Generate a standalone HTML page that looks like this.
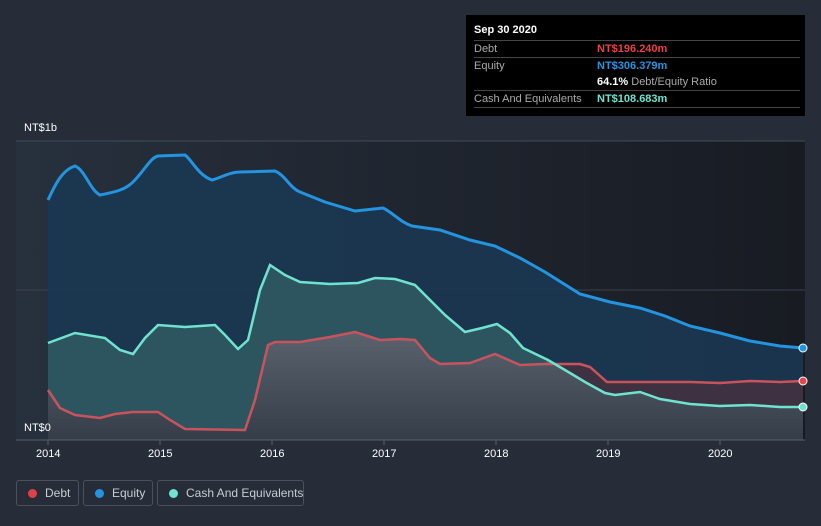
<!DOCTYPE html>
<html><head><meta charset="utf-8"><style>
body{margin:0;width:821px;height:526px;background:#262d39;font-family:"Liberation Sans",sans-serif;overflow:hidden;position:relative}
.tt{position:absolute;left:466px;top:15px;width:339px;height:101px;background:#000;color:#fff;font-size:11px}
.row{position:absolute;left:8px;width:326px;border-top:1px solid #444;height:17px;line-height:17px}
.lab{color:#aaa;position:absolute;left:0}
.val{position:absolute;left:123px;font-weight:bold;white-space:nowrap}
.leg{position:absolute;top:480px;height:26px;border:1px solid #4a505c;border-radius:3px;color:#c8ccd2;font-size:12px;line-height:25px;box-sizing:border-box;white-space:nowrap}
.dot{position:absolute;top:8px;left:11px;width:9px;height:9px;border-radius:50%}
.ax{position:absolute;color:#fff;font-size:11px}
</style></head><body>
<svg width="821" height="526" style="position:absolute;left:0;top:0">
<defs>
<linearGradient id="bg" x1="0" x2="1"><stop offset="0" stop-color="#27303d"/><stop offset="1" stop-color="#181b22"/></linearGradient>
<linearGradient id="gr" x1="0" y1="0" x2="0" y2="1"><stop offset="0" stop-color="#5a636d"/><stop offset="1" stop-color="#353d48"/></linearGradient>
</defs>
<rect x="16" y="141" width="789" height="299" fill="url(#bg)"/>
<line x1="16" y1="141" x2="805" y2="141" stroke="#444b57"/>
<line x1="16" y1="290" x2="805" y2="290" stroke="#3a414d"/>
<path fill="#1b3752" fill-opacity="0.9" d="M48,200 C55,185 62,170 75,166 C85,170 90,190 100,195 C115,192 125,190 133,182 C145,170 150,158 158,156 L185,155 C192,160 198,175 212,180 C220,178 230,172 240,172 L275,171 C285,175 290,188 300,192 L325,202 L355,211 L383,208 C392,212 400,222 412,226 L440,230 L470,240 L495,246 L520,258 L545,272 L580,294 L610,302 L640,308 L665,316 L690,326 L720,333 L750,341 L780,346 L803,348 L803,440 L48,440Z"/>
<path fill="#3e3242" d="M48,390 L60,408 L75,415 L100,418 L115,414 L133,412 L158,412 L170,420 L185,429 L245,430 L255,400 L268,345 L275,342 L300,342 L330,337 L355,332 L380,340 L400,339 L415,340 L430,358 L440,364 L470,363 L495,354 L520,365 L545,364 L580,364 L590,367 L607,382 L803,381 L803,440 L48,440Z"/>
<path fill="#2d5560" d="M48,343 L75,333 L105,338 L120,350 L133,354 L145,338 L158,325 L185,327 L215,325 L225,335 L238,349 L248,340 L260,290 L270,265 L285,275 L300,282 L330,284 L358,283 L375,278 L395,279 L415,285 L430,300 L445,315 L465,332 L482,328 L497,324 L510,333 L523,348 L548,360 L565,370 L585,382 L605,393 L615,395 L640,392 L660,399 L690,404 L720,406 L750,405 L780,407 L803,407 L803,440 L48,440Z"/>
<path fill="url(#gr)" d="M48,390 L60,408 L75,415 L100,418 L115,414 L133,412 L158,412 L170,420 L185,429 L245,430 L255,400 L268,345 L275,342 L300,342 L330,337 L355,332 L380,340 L400,339 L415,340 L430,358 L440,364 L470,363 L495,354 L520,365 L545,364 L548,360 L565,370 L585,382 L605,393 L615,395 L640,392 L660,399 L690,404 L720,406 L750,405 L780,407 L803,407 L803,440 L48,440Z"/>
<path fill="none" stroke="#2394df" stroke-width="3" d="M48,200 C55,185 62,170 75,166 C85,170 90,190 100,195 C115,192 125,190 133,182 C145,170 150,158 158,156 L185,155 C192,160 198,175 212,180 C220,178 230,172 240,172 L275,171 C285,175 290,188 300,192 L325,202 L355,211 L383,208 C392,212 400,222 412,226 L440,230 L470,240 L495,246 L520,258 L545,272 L580,294 L610,302 L640,308 L665,316 L690,326 L720,333 L750,341 L780,346 L803,348"/>
<path fill="none" stroke="#c9535d" stroke-width="2.5" d="M48,390 L60,408 L75,415 L100,418 L115,414 L133,412 L158,412 L170,420 L185,429 L245,430 L255,400 L268,345 L275,342 L300,342 L330,337 L355,332 L380,340 L400,339 L415,340 L430,358 L440,364 L470,363 L495,354 L520,365 L545,364 L580,364 L590,367 L607,382 L640,382 L690,382 L720,383 L750,381 L780,382 L803,381"/>
<path fill="none" stroke="#6fe3d0" stroke-width="2.5" d="M48,343 L75,333 L105,338 L120,350 L133,354 L145,338 L158,325 L185,327 L215,325 L225,335 L238,349 L248,340 L260,290 L270,265 L285,275 L300,282 L330,284 L358,283 L375,278 L395,279 L415,285 L430,300 L445,315 L465,332 L482,328 L497,324 L510,333 L523,348 L548,360 L565,370 L585,382 L605,393 L615,395 L640,392 L660,399 L690,404 L720,406 L750,405 L780,407 L803,407"/>
<line x1="16" y1="440" x2="805" y2="440" stroke="#5a606b"/>
<g stroke="#5a606b"><line x1="48" y1="440" x2="48" y2="445"/><line x1="160" y1="440" x2="160" y2="445"/><line x1="272" y1="440" x2="272" y2="445"/><line x1="384" y1="440" x2="384" y2="445"/><line x1="496" y1="440" x2="496" y2="445"/><line x1="608" y1="440" x2="608" y2="445"/><line x1="720" y1="440" x2="720" y2="445"/></g>
<circle cx="803" cy="348" r="4" fill="#2394df" stroke="#fff" stroke-width="1"/>
<circle cx="803" cy="381" r="4" fill="#e0474f" stroke="#fff" stroke-width="1"/>
<circle cx="803" cy="407" r="4" fill="#6fe3d0" stroke="#fff" stroke-width="1"/>
</svg>
<div class="ax" style="left:24px;top:122px">NT$1b</div>
<div class="ax" style="left:24px;top:422px">NT$0</div>
<div class="ax" style="left:36px;top:448px">2014</div>
<div class="ax" style="left:148px;top:448px">2015</div>
<div class="ax" style="left:260px;top:448px">2016</div>
<div class="ax" style="left:372px;top:448px">2017</div>
<div class="ax" style="left:484px;top:448px">2018</div>
<div class="ax" style="left:596px;top:448px">2019</div>
<div class="ax" style="left:708px;top:448px">2020</div>
<div class="tt">
<div style="position:absolute;left:8px;top:9px;font-weight:bold">Sep 30 2020</div>
<div class="row" style="top:25px"><span class="lab">Debt</span><span class="val" style="color:#e8404a">NT$196.240m</span></div>
<div class="row" style="top:42px"><span class="lab">Equity</span><span class="val" style="color:#2394df">NT$306.379m</span></div>
<div class="row" style="top:59px;border-top:none"><span class="val">64.1% <span style="color:#aaa;font-weight:normal">Debt/Equity Ratio</span></span></div>
<div class="row" style="top:75px"><span class="lab">Cash And Equivalents</span><span class="val" style="color:#6fe3d0">NT$108.683m</span></div>
<div class="row" style="top:92px;height:0"></div>
</div>
<div class="leg" style="left:16px;width:63px"><span class="dot" style="background:#e0404a"></span><span style="position:absolute;left:28px">Debt</span></div>
<div class="leg" style="left:83px;width:70px"><span class="dot" style="background:#2394df"></span><span style="position:absolute;left:28px">Equity</span></div>
<div class="leg" style="left:157px;width:147px"><span class="dot" style="background:#6fe3d0"></span><span style="position:absolute;left:28px">Cash And Equivalents</span></div>
</body></html>
